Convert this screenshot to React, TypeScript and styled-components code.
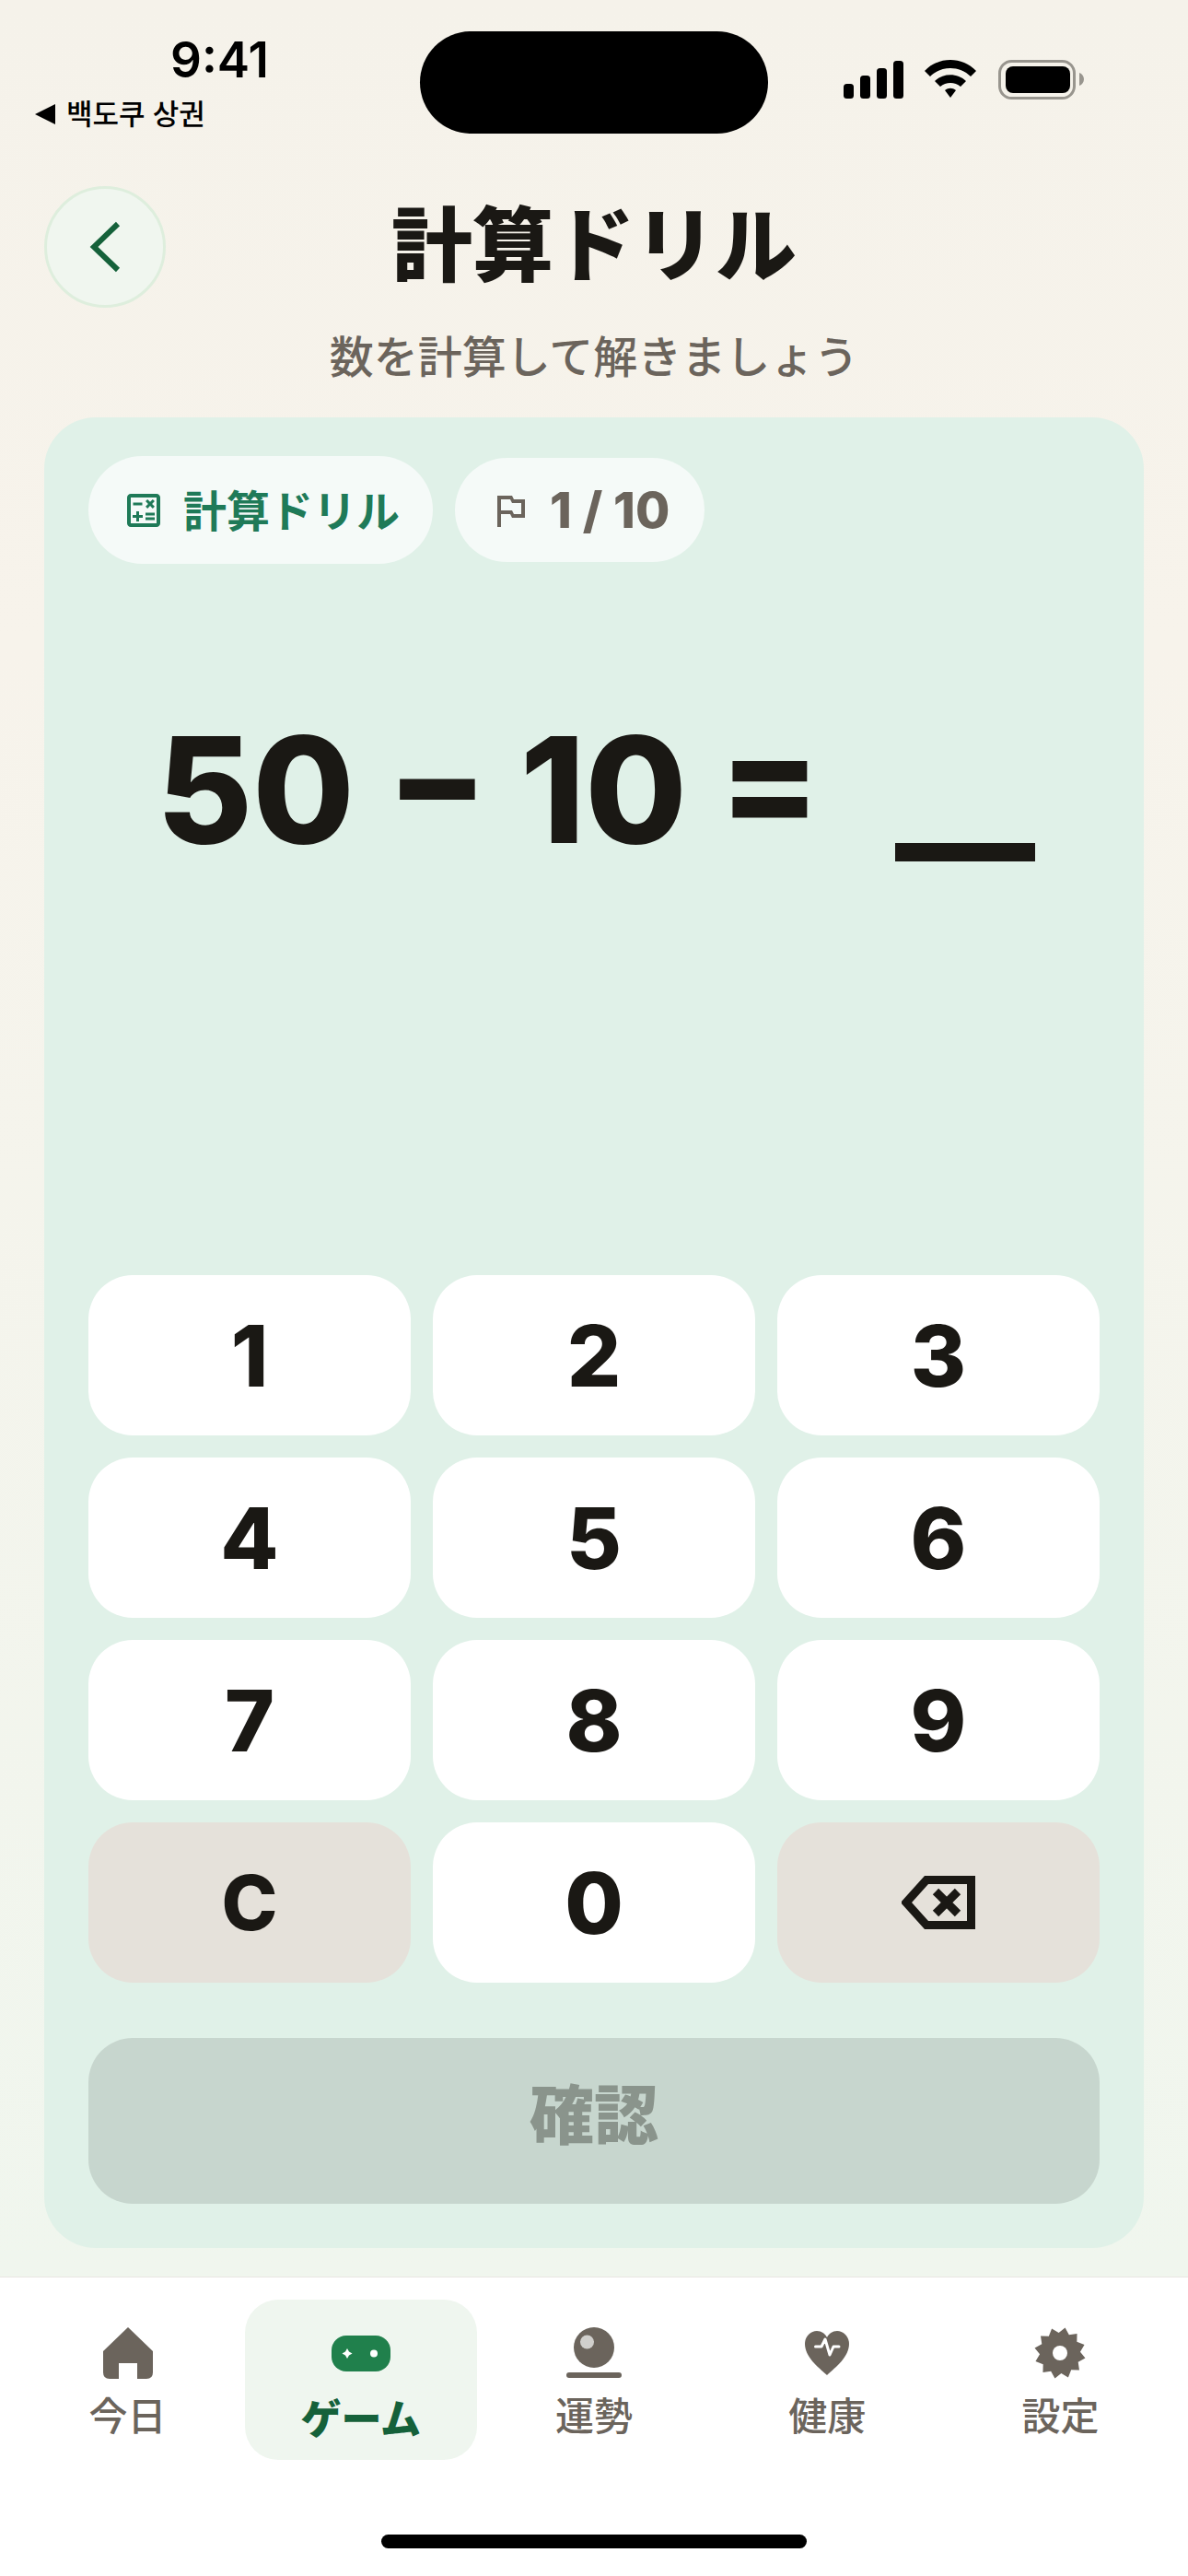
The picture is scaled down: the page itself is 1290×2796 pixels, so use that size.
import React from "react";
import styled, { createGlobalStyle } from "styled-components";
import { MdOutlineCalculate, MdOutlinedFlag } from "react-icons/md";

const jp = `Inter, "Noto Sans CJK JP", sans-serif`;

const GlobalStyle = createGlobalStyle`
  html, body {
    margin: 0;
    padding: 0;
  }
  body {
    font-family: ${jp};
    background: #f5f2ea;
  }
  * {
    box-sizing: border-box;
  }
`;

function StatusIcons() {
  return (
    <svg width="262" height="46" viewBox="0 0 262 46">
      <rect x="0" y="27" width="11" height="16" rx="3.5" fill="#000" />
      <rect x="18" y="18" width="11" height="25" rx="3.5" fill="#000" />
      <rect x="36" y="10" width="11" height="33" rx="3.5" fill="#000" />
      <rect x="54" y="2" width="11" height="41" rx="3.5" fill="#000" />
      <path
        d="M88 13 C 103 -3, 129 -3, 144 13 L 138 19 C 126 7, 106 7, 94 19 Z M 99 24 C 108 15, 124 15, 133 24 L 127 30 C 121 24.5, 111 24.5, 105 30 Z M 110 34 C 114 31, 118 31, 122 34 L 116 42 Z"
        fill="#000"
      />
      <rect x="169.5" y="2.5" width="81" height="40" rx="13" fill="none" stroke="#98958e" strokeWidth="3" />
      <rect x="176" y="8" width="70" height="29" rx="8" fill="#000" />
      <path d="M256 15 C 259 16, 261 19, 261 22 C 261 25, 259 28, 256 29 Z" fill="#98958e" />
    </svg>
  );
}

function BackspaceIcon() {
  return (
    <svg width="80" height="58" viewBox="0 0 80 58">
      <path d="M27 4.5 H75.5 V53.5 H27 L5 29 Z" fill="none" stroke="#1a1814" strokeWidth="9" strokeLinejoin="miter" />
      <path d="M37 17 L61 41 M61 17 L37 41" fill="none" stroke="#1a1814" strokeWidth="9" />
    </svg>
  );
}

function GameIcon() {
  return (
    <svg width="64" height="39" viewBox="0 0 64 39">
      <rect x="0" y="0" width="64" height="39" rx="16" fill="#20804c" />
      <path d="M17 14 L19 17.5 L22.5 19.5 L19 21.5 L17 25 L15 21.5 L11.5 19.5 L15 17.5 Z" fill="#fff" />
      <circle cx="46" cy="19.5" r="4" fill="#fff" />
    </svg>
  );
}

function HomeIcon() {
  return (
    <svg width="54" height="56" viewBox="0 0 54 56">
      <path
        d="M27 0 L54 26 L54 49 Q54 56 47 56 L37 56 L37 39 L17 39 L17 56 L7 56 Q0 56 0 49 L0 26 Z"
        fill="#6b645c"
      />
    </svg>
  );
}

function FortuneIcon() {
  return (
    <svg width="60" height="56" viewBox="0 0 60 56">
      <circle cx="30" cy="22" r="22" fill="#6b645c" />
      <circle cx="22.5" cy="16" r="7.5" fill="#d0cfcc" />
      <rect x="0" y="49" width="60" height="6" rx="3" fill="#6b645c" />
    </svg>
  );
}

function HeartIcon() {
  return (
    <svg width="48" height="48" viewBox="0 0 48 48">
      <path
        d="M24 48 C 14 39, 0 28, 0 14 C 0 6, 6 0, 13 0 C 18 0, 22 3, 24 7 C 26 3, 30 0, 35 0 C 42 0, 48 6, 48 14 C 48 28, 34 39, 24 48 Z"
        fill="#6b645c"
      />
      <path d="M11.5 17 H18 L22 9 L27 26 L31 17 H37" fill="none" stroke="#fff" strokeWidth="3" strokeLinecap="round" strokeLinejoin="round" />
    </svg>
  );
}

function GearIcon() {
  const teeth = 12;
  const points: string[] = [];
  for (let i = 0; i < teeth * 2; i++) {
    const r = i % 2 === 0 ? 28 : 22;
    const a = (Math.PI * i) / teeth - Math.PI / 2 + 0.2;
    points.push(`${28 + r * Math.cos(a)},${28 + r * Math.sin(a)}`);
  }
  return (
    <svg width="56" height="56" viewBox="0 0 56 56">
      <polygon points={points.join(" ")} fill="#6b645c" />
      <circle cx="28" cy="28" r="8" fill="#fff" />
    </svg>
  );
}

const tabs = [
  { label: "今日", icon: <HomeIcon /> },
  { label: "ゲーム", icon: <GameIcon />, active: true },
  { label: "運勢", icon: <FortuneIcon /> },
  { label: "健康", icon: <HeartIcon /> },
  { label: "設定", icon: <GearIcon /> },
];

const keys = ["1", "2", "3", "4", "5", "6", "7", "8", "9", "C", "0", "back"];

export default function App() {
  return (
    <Page>
      <GlobalStyle />
      <StatusBar>
        <StatusLeft>
          <Clock>9:41</Clock>
          <BackLink>
            <BackArrow />
            백도쿠 상권
          </BackLink>
        </StatusLeft>
        <Island />
        <StatusRight>
          <StatusIcons />
        </StatusRight>
      </StatusBar>

      <Header>
        <BackButton>
          <svg width="36" height="56" viewBox="0 0 36 56">
            <path d="M32 3 L6 28 L32 53" fill="none" stroke="#15613a" strokeWidth="6" />
          </svg>
        </BackButton>
        <Title>計算ドリル</Title>
      </Header>
      <Subtitle>数を計算して解きましょう</Subtitle>

      <Card>
        <Chips>
          <TypeChip>
            <MdOutlineCalculate size={48} />
            <ChipText>計算ドリル</ChipText>
          </TypeChip>
          <ProgressChip>
            <MdOutlinedFlag size={48} />
            1 / 10
          </ProgressChip>
        </Chips>

        <Question>
          <span>50 − 10 =</span>
          <Blank />
        </Question>

        <Keypad>
          {keys.map((k) => (
            <Key key={k} $muted={k === "C" || k === "back"}>
              {k === "back" ? <BackspaceIcon /> : k === "C" ? <ClearLabel>C</ClearLabel> : k}
            </Key>
          ))}
        </Keypad>

        <Confirm disabled>確認</Confirm>
      </Card>

      <TabBar>
        <Tabs>
          {tabs.map((t) => (
            <Tab key={t.label} $active={t.active}>
              <TabIcon>{t.icon}</TabIcon>
              <TabLabel $active={t.active}>{t.label}</TabLabel>
            </Tab>
          ))}
        </Tabs>
        <HomeIndicator />
      </TabBar>
    </Page>
  );
}

const Page = styled.div`
  width: 1290px;
  height: 2796px;
  display: flex;
  flex-direction: column;
  overflow: hidden;
  background: linear-gradient(180deg, #f5f2ea 0%, #f7f3eb 25%, #f0f6ee 88%);
`;

const StatusBar = styled.div`
  height: 194px;
  padding-top: 34px;
  display: grid;
  grid-template-columns: 456px 378px 1fr;
  align-items: start;
`;

const StatusLeft = styled.div`
  display: flex;
  flex-direction: column;
`;

const Clock = styled.div`
  padding-left: 185px;
  font-family: Inter, sans-serif;
  font-size: 53px;
  line-height: 62px;
  font-weight: 600;
  color: #000;
`;

const BackLink = styled.div`
  display: flex;
  align-items: center;
  gap: 12px;
  margin-top: 4px;
  padding-left: 38px;
  font-family: Inter, "Noto Sans CJK KR", sans-serif;
  font-size: 31px;
  line-height: 48px;
  font-weight: 500;
  color: #000;
`;

const BackArrow = styled.span`
  width: 0;
  height: 0;
  border-top: 11px solid transparent;
  border-bottom: 11px solid transparent;
  border-right: 22px solid #000;
`;

const Island = styled.div`
  height: 111px;
  border-radius: 56px;
  background: #000;
`;

const StatusRight = styled.div`
  padding: 30px 0 0 82px;
`;

const Header = styled.div`
  display: grid;
  grid-template-columns: 132px 1fr 132px;
  align-items: center;
  padding: 8px 48px 0;
`;

const BackButton = styled.button`
  width: 132px;
  height: 132px;
  padding: 0;
  display: flex;
  align-items: center;
  justify-content: center;
  border-radius: 50%;
  border: 3px solid #deeedd;
  background: #f0f6ef;
`;

const Title = styled.h1`
  margin: 0;
  padding-bottom: 3px;
  text-align: center;
  font-size: 88px;
  line-height: 129px;
  font-weight: 900;
  color: #1a1814;
`;

const Subtitle = styled.div`
  margin-top: 19px;
  text-align: center;
  font-size: 48px;
  line-height: 70px;
  font-weight: 500;
  color: #6b645c;
`;

const Card = styled.div`
  margin: 30px 48px 0;
  height: 1987px;
  padding: 42px 48px 47px;
  display: flex;
  flex-direction: column;
  border-radius: 56px;
  background: #e0f1e8;
`;

const Chips = styled.div`
  display: flex;
  align-items: center;
  gap: 24px;
`;

const TypeChip = styled.div`
  height: 117px;
  padding: 0 36px;
  display: flex;
  align-items: center;
  gap: 19px;
  border-radius: 59px;
  background: #f5faf8;
  color: #1f7a58;
`;

const ChipText = styled.span`
  padding-bottom: 4px;
  font-size: 47px;
  font-weight: 700;
`;

const ProgressChip = styled.div`
  height: 113px;
  padding: 0 38px 0 36px;
  display: flex;
  align-items: center;
  gap: 19px;
  border-radius: 57px;
  background: #f5faf8;
  font-size: 54px;
  font-weight: 800;
  color: #6b645c;
`;

const Question = styled.div`
  height: 772px;
  padding: 145px 0 0 74px;
  display: flex;
  align-items: flex-start;
  gap: 81px;
  font-family: Inter, sans-serif;
  font-size: 160px;
  line-height: 200px;
  font-weight: 800;
  color: #1a1814;
  white-space: nowrap;
`;

const Blank = styled.div`
  flex: none;
  width: 152px;
  height: 20px;
  margin-top: 158px;
  background: #1a1814;
`;

const Keypad = styled.div`
  display: grid;
  grid-template-columns: repeat(3, 350px);
  grid-auto-rows: 174px;
  gap: 24px;
`;

const Key = styled.button<{ $muted?: boolean }>`
  padding: 0;
  display: flex;
  align-items: center;
  justify-content: center;
  border: none;
  border-radius: 48px;
  background: ${(p) => (p.$muted ? "#e5e1da" : "#ffffff")};
  font-family: Inter, sans-serif;
  font-size: 92px;
  font-weight: 800;
  color: #1a1814;
`;

const ClearLabel = styled.span`
  font-size: 82px;
  font-weight: 800;
`;

const Confirm = styled.button`
  margin-top: 60px;
  height: 180px;
  padding: 0 0 22px;
  border: none;
  border-radius: 48px;
  background: #c7d6ce;
  font-family: ${jp};
  font-size: 70px;
  font-weight: 900;
  color: #8a948c;
`;

const TabBar = styled.div`
  margin-top: 31px;
  flex: 1;
  display: flex;
  flex-direction: column;
  align-items: center;
  border-top: 1px solid #e8e6e2;
  background: #fff;
`;

const Tabs = styled.div`
  width: 100%;
  height: 174px;
  margin-top: 24px;
  padding: 0 12px;
  display: grid;
  grid-template-columns: repeat(5, 1fr);
`;

const Tab = styled.div<{ $active?: boolean }>`
  width: 252px;
  justify-self: center;
  padding-top: 23px;
  display: flex;
  flex-direction: column;
  align-items: center;
  border-radius: 36px;
  background: ${(p) => (p.$active ? "#eff6ef" : "transparent")};
`;

const TabIcon = styled.div`
  height: 70px;
  display: flex;
  align-items: center;
  justify-content: center;
`;

const TabLabel = styled.div<{ $active?: boolean }>`
  margin-top: ${(p) => (p.$active ? "7px" : "4px")};
  font-size: ${(p) => (p.$active ? "44px" : "42px")};
  line-height: 60px;
  font-weight: ${(p) => (p.$active ? 800 : 500)};
  color: ${(p) => (p.$active ? "#15613a" : "#6b645c")};
`;

const HomeIndicator = styled.div`
  width: 462px;
  height: 15px;
  margin-top: 81px;
  border-radius: 8px;
  background: #000;
`;
